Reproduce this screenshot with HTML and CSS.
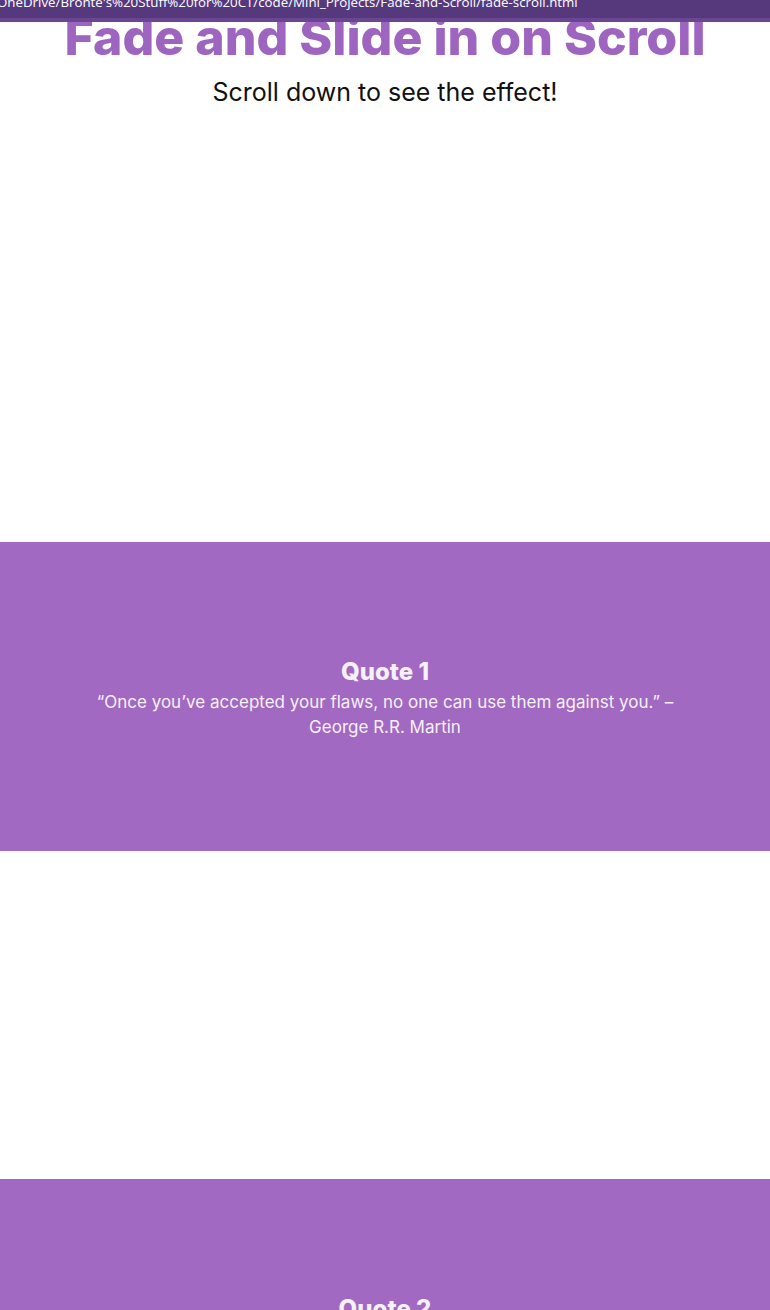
FILE: index.html
```html
<!DOCTYPE html>
<html lang="en">
<head>
<meta charset="utf-8">
<title>Fade and Slide in on Scroll</title>
<link rel="stylesheet" href="styles.css">
</head>
<body>
<div class="statusbar"><span class="url">OneDrive/Bronte's%20Stuff%20for%20CT/code/Mini_Projects/Fade-and-Scroll/fade-scroll.html</span></div>
<header class="intro">
  <h1 class="title">Fade and Slide in on Scroll</h1>
  <p class="subtitle">Scroll down to see the effect!</p>
</header>
<section class="quote">
  <h2 class="quote-title">Quote 1</h2>
  <p class="quote-text">“Once you’ve accepted your flaws, no one can use them against you.” – George R.R. Martin</p>
</section>
<div class="spacer"></div>
<section class="quote">
  <h2 class="quote-title">Quote 2</h2>
  <p class="quote-text">“Be yourself; everyone else is already taken.” – Oscar Wilde</p>
</section>
</body>
</html>
```
FILE: styles.css
```css
html, body {
  margin: 0;
  padding: 0;
  background: #ffffff;
}
body {
  font-family: "Inter", "Open Sans", sans-serif;
  overflow: hidden;
}
.statusbar {
  position: fixed;
  top: 0;
  left: 0;
  right: 0;
  height: 18px;
  background: #56397d;
  border-bottom: 4px solid #6a4592;
  overflow: hidden;
  z-index: 10;
}
.url {
  display: block;
  margin-left: -3px;
  margin-top: -7px;
  font-family: "Open Sans", "Liberation Sans", sans-serif;
  font-size: 13.3px;
  line-height: 18px;
  color: #ffffff;
  white-space: nowrap;
}
.intro {
  height: 542px;
  text-align: center;
  padding-top: 9px;
  box-sizing: border-box;
}
.title {
  margin: 0;
  font-size: 50px;
  line-height: 56px;
  font-weight: 800;
  color: #9e65c0;
}
.subtitle {
  margin: 12px 0 0;
  font-size: 25px;
  line-height: 30px;
  color: #111111;
}
.quote {
  height: 309px;
  background: #a169c1;
  display: flex;
  flex-direction: column;
  align-items: center;
  text-align: center;
  color: #f6f0f9;
  padding-top: 115px;
  box-sizing: border-box;
}
.quote-title {
  margin: 0 0 3px;
  font-size: 24px;
  line-height: 30px;
  font-weight: 800;
}
.quote-text {
  margin: 0;
  max-width: 600px;
  font-size: 17px;
  line-height: 25px;
}
.spacer {
  height: 328px;
}
```
